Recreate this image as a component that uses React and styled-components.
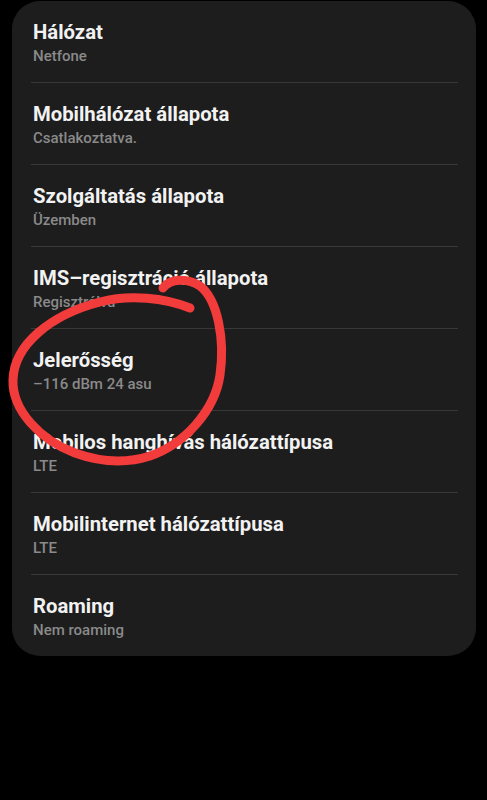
import React from 'react';
import styled, { createGlobalStyle } from 'styled-components';

const Global = createGlobalStyle`
  html, body {
    margin: 0;
    padding: 0;
    background: #000;
  }
  body {
    font-family: Roboto, "Noto Sans", "Liberation Sans", sans-serif;
    -webkit-font-smoothing: antialiased;
  }
`;

const Screen = styled.div`
  width: 487px;
  height: 800px;
  background: #000;
  padding-top: 1px;
  box-sizing: border-box;
`;

const Card = styled.div`
  position: relative;
  margin-left: 12px;
  width: 464px;
  background: #1d1d1d;
  border-radius: 28px;
  display: flex;
  flex-direction: column;
`;

const Row = styled.div`
  display: flex;
  flex-direction: column;
  padding: 18px 21px 16px 21px;
`;

const Title = styled.div`
  color: #f2f2f2;
  font-size: 20.3px;
  font-weight: 700;
  line-height: 26px;
  white-space: nowrap;
`;

const Sub = styled.div`
  margin-top: 1px;
  color: #8a8a8a;
  font-size: 15px;
  font-weight: 500;
  line-height: 20px;
`;

const Divider = styled.div`
  height: 1px;
  margin: 0 18px 0 19px;
  background: #383838;
`;

const Scribble = styled.svg`
  position: absolute;
  left: -12px;
  top: -1px;
  pointer-events: none;
`;

const items = [
  ['Hálózat', 'Netfone'],
  ['Mobilhálózat állapota', 'Csatlakoztatva.'],
  ['Szolgáltatás állapota', 'Üzemben'],
  ['IMS–regisztráció állapota', 'Regisztrálva'],
  ['Jelerősség', '–116 dBm 24 asu'],
  ['Mobilos hanghívás hálózattípusa', 'LTE'],
  ['Mobilinternet hálózattípusa', 'LTE'],
  ['Roaming', 'Nem roaming'],
];

export default function App() {
  return (
    <Screen>
      <Global />
      <Card>
        {items.map(([t, s], i) => (
          <React.Fragment key={t}>
            {i > 0 && <Divider />}
            <Row>
              <Title>{t}</Title>
              <Sub>{s}</Sub>
            </Row>
          </React.Fragment>
        ))}
        <Scribble width="487" height="700" viewBox="0 0 487 700">
          <path
            d="M 190 308 C 165 298, 130 294, 100 302 C 50 315, 14 345, 13 380 C 12 410, 40 440, 75 453 C 100 462, 125 464, 150 456 C 185 444, 215 410, 220 375 C 225 340, 218 300, 200 286 C 188 278, 170 278, 163 288"
            fill="none"
            stroke="#f23b3b"
            strokeWidth="9"
            strokeLinecap="round"
            strokeLinejoin="round"
          />
        </Scribble>
      </Card>
    </Screen>
  );
}
